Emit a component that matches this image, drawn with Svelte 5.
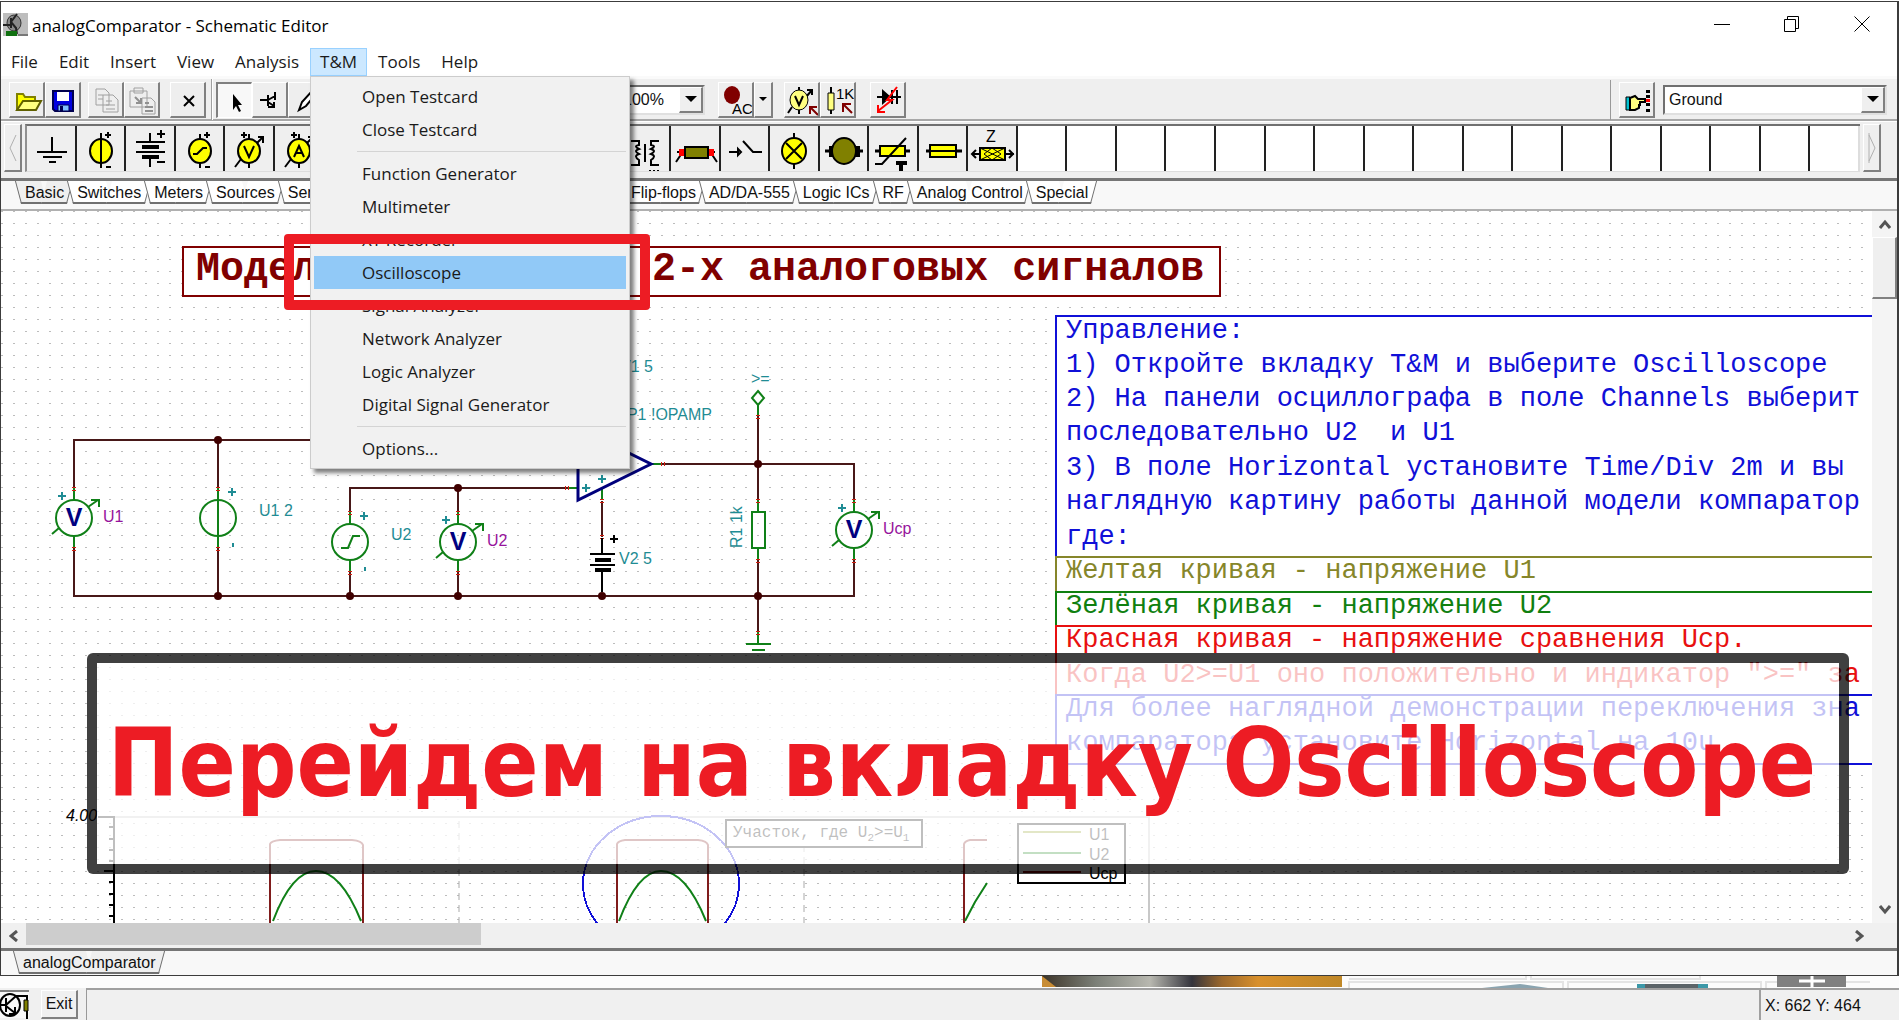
<script>
  const K = '#000', Y = '#ffff00', PY = '#ffff80', O = '#808000', R = '#800000';
  // Icon parts: d = path, f = fill, s = stroke, w = stroke width; t = caption text at x, y with size z
  const ring = (cx, cy, r) => `M${cx - r} ${cy}a${r} ${r + 1} 0 1 0 ${2 * r} 0a${r} ${r + 1} 0 1 0 ${-2 * r} 0z`;
  const icons = {
    ground: [{ d: 'M25 11V26M10 26H40M16 31H35M22 36H29', s: K, w: 2 }],
    source: [{ d: ring(24, 25, 11), f: Y, s: K, w: 2 }, { d: 'M24 7V42M28 9H34M31 6V12M29 41H34', s: K, w: 2 }],
    battery: [{ d: 'M24 7V16M10 16H39M10 26H39M24 32V41M31 8H39M35 4V12M31 36H39', s: K, w: 2 }, { d: 'M16 21H33M16 31H33', s: K, w: 4 }],
    generator: [{ d: ring(24, 25, 11), f: Y, s: K, w: 2 }, { d: 'M24 8V13M24 37V42M28 9H34M31 6V12M29 41H34M17 28H21L27 22H31', s: K, w: 2 }],
    voltmeter: [{ d: ring(24, 25, 11), f: Y, s: K, w: 2 }, { d: 'M24 8V13M24 37V42M16 9H22M19 6V12M32 17L38 11M33 11H38V17M16 33L10 41M19 20L24 31L29 20', s: K, w: 2 }],
    ammeter: [{ d: ring(24, 25, 11), f: Y, s: K, w: 2 }, { d: 'M24 8V13M24 37V42M16 9H22M19 6V12M32 17L38 11M33 11H38V17M16 33L10 41M19 31L24 20L29 31M21 27H27', s: K, w: 2 }],
    transformer: [{ d: 'M10 15H18V19Q12 20 18 23Q12 25 18 28Q12 30 18 34V39H10M38 15H30V19Q36 20 30 23Q36 25 30 28Q36 30 30 34V39H38M24 18V36', s: K, w: 2 }, { d: 'M28 45H38', s: K, w: 2, a: '2 2' }],
    potentiometer: [{ d: 'M6 26H44M11 27L5 36M40 27L46 36', s: K, w: 2 }, { d: 'M8 23H13V30H8ZM38 23H43V30H38Z', f: '#f00' }, { d: 'M14 21H37V32H14Z', f: O, s: K, w: 2 }],
    switch: [{ d: 'M8 26H18M22 15L32 26H41M17 23V29L20 26Z', s: K, w: 2 }],
    lamp: [{ d: 'M24 7V43', s: K, w: 2 }, { d: ring(24, 25, 12), f: Y, s: K, w: 2 }, { d: 'M16 17L32 33M32 17L16 33', s: K, w: 2 }],
    motor: [{ d: 'M5 25H43', s: K, w: 3 }, { d: 'M9 20H15V31H9ZM34 20H40V31H34Z', f: K }, { d: ring(24, 25, 12), f: O, s: K, w: 2 }],
    thermistor: [{ d: 'M6 25H41', s: K, w: 3 }, { d: 'M11 20H36V30H11Z', f: Y, s: K, w: 2 }, { d: 'M6 38H13L37 12', s: K, w: 2 }, { d: 'M27 37H38M32 37V46', s: K, w: 4 }],
    fuse: [{ d: 'M7 25H43', s: K, w: 3 }, { d: 'M11 19H37V31H11Z', f: Y, s: K, w: 2 }, { d: 'M11 25H37', s: K, w: 2 }],
    impedance: [{ d: 'M4 28H46M8 24L4 28L8 32M41 24L45 28L41 32', s: K, w: 2 }, { d: 'M12 22H37V34H12Z', f: Y, s: K, w: 2 }, { d: 'M12 22L37 34M37 22L12 34M24 22L16 28L24 34L33 28Z', s: K, w: 1 }, { t: 'Z', x: 18, y: 16, z: 16, f: K }],
    open: [{ d: 'M7 27V11H13L15 14H25V18', f: Y, s: O, w: 2 }, { d: 'M7 27L13 18H31L26 27Z', f: PY, s: '#606000', w: 2 }],
    save: [{ d: 'M7 8H27V28H9L7 26Z', f: '#0000e0', s: '#000050', w: 2 }, { d: 'M11 9H23V18H11Z', f: '#fff' }, { d: 'M12 22H23V28H12Z', f: '#80c0ff', s: '#000050', w: 1 }, { d: 'M14 23H17V28H14Z', f: '#000050' }],
    copy: [{ d: 'M7 6H16L20 10V22H7ZM14 12H24L29 17V29H14Z', f: '#eee', s: '#a0a0a0', w: 1 }, { d: 'M9 12H14M9 16H14M17 18H23M17 22H26M17 26H26', s: '#a0a0a0', w: 1 }],
    paste: [{ d: 'M5 8H22V24H5ZM9 5H18V10H9ZM17 15H26L30 19V31H17Z', f: '#eee', s: '#a0a0a0', w: 1 }, { d: 'M10 14L16 20M16 15V20H11M20 20H24M20 24H28M20 28H28', s: '#909090', w: 2 }],
    remove: [{ d: 'M13 13L23 23M23 13L13 23', s: K, w: 2 }],
    arrow: [{ d: 'M15 10V26L18 22L21 28L23 27L20 21H24Z', f: K }],
    wire: [{ d: 'M7 17H15M15 12V23M15 17L22 13M22 9V17M15 19L21 23M21 19V24H15', s: K, w: 2 }],
    pen: [{ d: 'M10 27L13 19L23 8L27 11L17 23Z', f: '#fff', s: K, w: 2 }],
    ac: [{ d: ring(13, 12, 8), f: R }, { t: 'AC', x: 13, y: 31, z: 15, f: K }],
    probe: [{ d: 'M14 4V31M21 14L27 7M22 7H27V12M7 24L3 30', s: K, w: 2 }, { d: ring(14, 17, 9), f: PY, s: K, w: 1 }, { d: 'M10 13L14 22L18 13', s: K, w: 2 }, { d: 'M33 32L25 24M25 31V24H32', s: R, w: 2 }],
    value: [{ d: 'M10 4V31', s: K, w: 2 }, { d: 'M7 10H13V27H7Z', f: PY, s: K, w: 1 }, { t: '1K', x: 15, y: 16, z: 15, f: K }, { d: 'M31 30L22 21M22 29V21H30', s: R, w: 2 }],
    diode: [{ d: 'M6 14H30M21 7V21M26 7V21', s: K, w: 2 }, { d: 'M11 6L20 14L11 22Z', f: K }, { d: 'M26 4L16 17H21L7 28M7 22V29H14', s: '#f00', w: 2 }],
    hand: [{ d: 'M6 14H10V27H6Z', f: '#00c0d0', s: K, w: 1 }, { d: 'M10 15L15 13L18 16H25V19H20V22H19V25L15 27H10Z', f: PY, s: K, w: 2 }, { d: 'M28 7V10M28 12V15M28 20V23M28 26V29', s: K, w: 4 }, { d: 'M28 16V19', s: '#f00', w: 4 }],
    app: [{ d: 'M0 0H25V23H0Z', f: '#bdbdbd' }, { d: ring(11, 10, 7), f: '#8a8a8a', s: '#333', w: 1 }, { d: 'M8 5V15M14 1L8 9L13 15L14 21M0 12H7', s: '#222', w: 2 }, { d: 'M3 18H14V23H3Z', f: '#107010' }, { d: 'M15 22H25', s: '#333', w: 1 }],
    tina: [{ d: 'M0 3H29V30H0Z', f: '#f8f8f8' }, { d: 'M0 3H29', s: '#808080', w: 2 }, { d: ring(10, 17, 10), s: K, w: 2 }, { d: 'M0 17H6M6 10V24M6 17L16 8H27V31M6 18L15 25M15 19V26H9', s: K, w: 2 }, { d: 'M24 12H28V23H24Z', f: O, s: K, w: 1 }]
  };
  const menus = ['File', 'Edit', 'Insert', 'View', 'Analysis', 'T&M', 'Tools', 'Help'];
  const groups = [
    ['Open Testcard', 'Close Testcard'],
    ['Function Generator', 'Multimeter', 'XY Recorder', 'Oscilloscope', 'Signal Analyzer', 'Network Analyzer', 'Logic Analyzer', 'Digital Signal Generator'],
    ['Options...']
  ];
  const parts = ['ground', 'source', 'battery', 'generator', 'voltmeter', 'ammeter', '', '', '', '', '', '', 'transformer', 'potentiometer', 'switch', 'lamp', 'motor', 'thermistor', 'fuse', 'impedance'];
  const cells = Array.from({ length: 37 }, (_, i) => i < parts.length ? { part: parts[i] } : null);
  const tabsLeft = ['Basic', 'Switches', 'Meters', 'Sources', 'Semiconductors', 'Spice Macros', 'Gates'];
  const tabsRight = ['Flip-flops', 'AD/DA-555', 'Logic ICs', 'RF', 'Analog Control', 'Special'];
  const notes = [
    { c: '#1010d8', y: 316, h: 241, lines: [[338, 'Управление:'], [372, '1) Откройте вкладку T&M и выберите Oscilloscope'], [406, '2) На панели осциллографа в поле Channels выберит'], [440, 'последовательно U2  и U1'], [475, '3) В поле Horizontal установите Time/Div 2m и вы'], [509, 'наглядную картину работы данной модели компаратор'], [544, 'где:']] },
    { c: '#86862a', y: 557, h: 35, lines: [[578, 'Желтая кривая - напряжение U1']] },
    { c: '#108010', y: 592, h: 34, lines: [[613, 'Зелёная кривая - напряжение U2']] },
    { c: '#e81010', y: 626, h: 69, lines: [[647, 'Красная кривая - напряжение сравнения Uср.'], [682, 'Когда U2>=U1 оно положительно и индикатор ">=" за']] },
    { c: '#1010d8', y: 695, h: 69, lines: [[716, 'Для более наглядной демонстрации переключения зна'], [750, 'компаратора установите Horizontal на 10u']] }
  ];
  const nodes = [[217, 440], [217, 596], [349, 596], [457, 488], [457, 596], [601, 596], [757, 464], [757, 596]];
  const ticks = [828, 840, 851, 862, 883, 895, 906, 917];
</script>

{#snippet icon(name, w, h)}
  <svg class="icon" width={w} height={h} viewBox="0 0 {w} {h}" aria-hidden="true">
    {#each icons[name] ?? [] as p}
      {#if p.t}
        <text x={p.x} y={p.y} font-size={p.z} fill={p.f}>{p.t}</text>
      {:else}
        <path d={p.d} fill={p.f ?? 'none'} stroke={p.s ?? 'none'} stroke-width={p.w ?? 0} stroke-dasharray={p.a} />
      {/if}
    {/each}
  </svg>
{/snippet}

{#snippet tool(name, label)}
  <button class="tool" class:pressed={name === 'arrow'} aria-label={label}>{@render icon(name, 33, 33)}</button>
{/snippet}

<div class="app">
  <main class="window">
    <header class="title">
      {@render icon('app', 25, 23)}
      <h1>analogComparator - Schematic Editor</h1>
      <div class="controls">
        <button aria-label="Minimize"><svg width="16" height="16"><path d="M0 8.500H16" /></svg></button>
        <button aria-label="Restore"><svg width="16" height="16"><path d="M.5 3.500H11.500V15.500H.5ZM3.500 3.500V.5H14.500V12.500H11.500" /></svg></button>
        <button aria-label="Close"><svg width="16" height="16"><path d="M.5 .5L15.500 15.500M15.500 .5L.5 15.500" /></svg></button>
      </div>
    </header>

    <nav class="menubar">
      {#each menus as m}
        <div class="entry">
          <button class:open={m === 'T&M'}>{m}</button>
          {#if m === 'T&M'}
            <div class="popup">
              {#each groups as g, i}
                {#if i}<hr />{/if}
                {#each g as item}
                  <button class:current={item === 'Oscilloscope'}>{item}</button>
                {/each}
              {/each}
            </div>
          {/if}
        </div>
      {/each}
    </nav>

    <div class="toolbar">
      <div class="tools">{@render tool('open', 'Open')}{@render tool('save', 'Save')}</div>
      <div class="tools">{@render tool('copy', 'Copy')}{@render tool('paste', 'Paste')}</div>
      <div class="tools">{@render tool('remove', 'Delete')}</div>
      <div class="divider"></div>
      <div class="tools drawing">{@render tool('arrow', 'Select')}{@render tool('wire', 'Wire')}{@render tool('pen', 'Draw')}</div>
      <label class="combo zoom"><select aria-label="Zoom"><option>100%</option></select><span class="drop"></span></label>
      <div class="tools run">{@render tool('ac', 'AC analysis')}<button class="tool narrow" aria-label="Analysis mode"><span class="caret"></span></button></div>
      <div class="tools">{@render tool('probe', 'Voltage probe')}{@render tool('value', 'Change value')}</div>
      <div class="tools">{@render tool('diode', 'Fault')}</div>
      <div class="finder">
        {@render tool('hand', 'Find component')}
        <label class="combo part"><select aria-label="Component"><option>Ground</option></select><span class="drop"></span></label>
      </div>
    </div>

    <div class="palette">
      <button class="scroll" aria-label="Previous parts"><svg width="10" height="32"><path d="M8 3L2 16L8 29" /></svg></button>
      <div class="cells">
        {#each cells as c}
          {#if c}
            <button class="cell" aria-label={c.part || 'part'}>{@render icon(c.part, 49, 46)}</button>
          {:else}
            <span class="cell blank"></span>
          {/if}
        {/each}
      </div>
      <button class="scroll" aria-label="Next parts"><svg width="10" height="32"><path d="M2 1V31M2 3L8 16L2 29" /></svg></button>
    </div>

    <div class="tabs">
      <div class="tabset first">
        {#each tabsLeft as t}<button class="tab" class:active={t === 'Basic'}>{t}</button>{/each}
      </div>
      <div class="tabset">
        {#each tabsRight as t}<button class="tab">{t}</button>{/each}
      </div>
    </div>

    <section class="work">
      <svg class="sheet" aria-label="Schematic">
        <defs>
          <pattern id="grid" width="12" height="12" patternUnits="userSpaceOnUse" x="0" y="0">
            <rect x="0" y="0" width="2" height="1" fill="#bcbcbc" />
          </pattern>
        </defs>
        <rect width="100%" height="100%" fill="url(#grid)" />
        {#snippet plus(x, y, cls)}
          <path class={cls} d="M{x - 4} {y}H{x + 4}M{x} {y - 4}V{y + 4}" />
        {/snippet}
        {#snippet pin(x, y)}
          <path class="pin" d="M{x - 2} {y - 1}H{x + 2}M{x - 2} {y + 2}H{x + 2}" />
        {/snippet}
        {#snippet body(x, y)}
          <path class="part" d="M{x} {y - 30}V{y - 18}M{x} {y + 18}V{y + 30}" />
          <circle class="part" cx={x} cy={y} r="18" />
          {@render pin(x, y - 30)}
          {@render pin(x, y + 30)}
        {/snippet}
        {#snippet meter(x, y)}
          {@render body(x, y)}
          <path class="part" d="M{x + 14} {y - 11}L{x + 24} {y - 18}M{x + 17} {y - 18}H{x + 25}V{y - 11}M{x - 15} {y + 10}L{x - 22} {y + 16}" />
          {@render plus(x - 12, y - 22, 'mark')}
          <text class="v" {x} y={y + 8}>V</text>
        {/snippet}
        <g transform="translate(0 -211)">
          <path class="wire" d="M73 488V440H600M73 548V596H853V560M217 440V488M217 548V596M349 512V488H567M349 572V596M457 488V512M457 572V596M601 501V537M660 464H853V500M757 416V500M757 560V631" />
          {#each nodes as [x, y]}<circle cx={x} cy={y} r="4" fill="#400000" />{/each}
          {@render meter(73, 518)}
          {@render body(217, 518)}
          <path class="part" d="M217 500V536" />
          {@render plus(231, 492, 'mark')}
          <path class="mark" d="M232 543V547M364 567V571" />
          {@render body(349, 542)}
          <path class="part" d="M340 548H347L352 536H359" />
          {@render plus(363, 516, 'mark')}
          {@render meter(457, 542)}
          {@render meter(853, 530)}
          <path class="part" d="M567 488H577M650 464H660M601 488V500M757 404V416M757 500V512M757 548V560M751 512H764V548H751ZM757 391L763 398L757 405L751 398ZM757 631V644M745 644H770M751 650H764" />
          <path class="amp" d="M577 428V500L650 464Z" />
          <path class="pin" d="M564 486V490M567 486V490M660 462V466M663 462V466" />
          {@render plus(585, 488, 'mark')}
          {@render plus(601, 479, 'mark')}
          {@render pin(601, 500)}{@render pin(601, 536)}{@render pin(757, 416)}{@render pin(757, 500)}{@render pin(757, 560)}{@render pin(757, 632)}
          <path class="cellplate" d="M601 538V554M589 554H614M589 565H614M601 571V592" />
          <path class="cellplate thick" d="M594 560H610M594 570H610" />
          {@render plus(613, 539, 'cellplate')}
          <g class="teal">
            <text x="258" y="516">U1 2</text>
            <text x="390" y="540">U2</text>
            <text x="619" y="372">V1 5</text>
            <text x="711" y="420" text-anchor="end">OP1 !OPAMP</text>
            <text x="618" y="564">V2 5</text>
            <text x="750" y="384">&gt;=</text>
            <text transform="translate(741 548) rotate(-90)">R1 1k</text>
          </g>
          <g class="purple">
            <text x="102" y="522">U1</text>
            <text x="486" y="546">U2</text>
            <text x="882" y="534">Ucp</text>
          </g>

          <rect x="182" y="247" width="1037" height="49" fill="#fff" stroke="#800000" stroke-width="2" shape-rendering="crispEdges" />
          <text class="heading" x="195" y="280">Модель компаратора 2-х аналоговых сигналов</text>

          {#each notes as n}
            <rect x="1055" y={n.y} width="1100" height={n.h} fill="#fff" stroke={n.c} stroke-width="2" shape-rendering="crispEdges" />
            {#each n.lines as [y, t]}<text class="note" x="1065" {y} fill={n.c}>{t}</text>{/each}
          {/each}
        </g>

        <g transform="translate(-1 -212)">
          <path d="M98 818H1149V930" fill="none" stroke="#c8c8c8" stroke-width="2" />
          <path d="M459 822V930M804 822V930" stroke="#aaa" stroke-width="1" stroke-dasharray="7 5" />
          <path class="cellplate" d="M98 818H114V930M104 872H114" />
          {#each ticks as y}<path class="cellplate" d="M109 {y}H114" />{/each}
          <text x="66" y="822" font-style="italic" class="scale">4.00</text>
          <path class="pulse" d="M270 930V845Q271 842 280 841H352Q362 842 363 846V930M617 930V845Q618 842 625 841H698Q707 842 708 846V930M964 930V845Q965 842 970 841H987" />
          <path class="sine" d="M273 922C287 885 301 872 316 872S346 885 361 922M619 922C633 885 647 872 661 872S691 885 706 922M965 922L975 903L987 884" />
          <ellipse cx="661" cy="885" rx="78" ry="68" fill="none" stroke="#1010d8" stroke-width="2" shape-rendering="crispEdges" />
          <rect x="726" y="821" width="196" height="27" fill="#fff" stroke="#000" stroke-width="2" />
          <text class="zone" x="733" y="838">Участок, где U<tspan font-size="11" dy="4">2</tspan><tspan dy="-4">&gt;=U</tspan><tspan font-size="11" dy="4">1</tspan></text>
          <rect x="1018" y="825" width="107" height="59" fill="#fff" stroke="#000" stroke-width="2" />
          <path d="M1023 833H1081" stroke="#90a020" stroke-width="2" />
          <path d="M1023 854H1081" stroke="#108010" stroke-width="2" />
          <path d="M1023 873H1081" stroke="#800000" stroke-width="2" />
          <g class="scale"><text x="1089" y="841">U1</text><text x="1089" y="861">U2</text><text x="1089" y="880">Ucp</text></g>
        </g>
      </svg>
      <div class="vbar">
        <button aria-label="Scroll up"><svg width="12" height="10"><path d="M1 9L6 3L11 9" /></svg></button>
        <div class="vthumb"></div>
        <button class="end" aria-label="Scroll down"><svg width="12" height="10"><path d="M1 1L6 7L11 1" /></svg></button>
      </div>
    </section>
    <div class="hbar">
      <button aria-label="Scroll left"><svg width="10" height="12"><path d="M8 1L2 6L8 11" /></svg></button>
      <div class="hthumb"></div>
      <button class="end" aria-label="Scroll right"><svg width="10" height="12"><path d="M2 1L8 6L2 11" /></svg></button>
    </div>
    <div class="tabs docs"><button class="tab active">analogComparator</button></div>
  </main>

  <svg class="desktop" aria-hidden="true">
    <defs>
      <linearGradient id="photo"><stop offset="0" stop-color="#3c3428" /><stop offset=".18" stop-color="#7c8078" /><stop offset=".36" stop-color="#b8b8b0" /><stop offset=".5" stop-color="#34343c" /><stop offset=".6" stop-color="#9c682c" /><stop offset=".72" stop-color="#d8902c" /><stop offset="1" stop-color="#c08828" /></linearGradient>
    </defs>
    <rect x="1042" width="300" height="11" fill="url(#photo)" />
    <path d="M1042 0L1056 11H1042Z" fill="#c88c34" />
    <path d="M1349 3H1526V0M1531 0V3H1700V0M1349 12V6H1563V12M1568 12V6H1761V12M1766 12V6H1870" fill="none" stroke="#e4e4e4" stroke-width="2" />
    <path d="M1482 12L1520 8L1548 12Z" fill="#8aa4b0" />
    <path d="M1638 8H1706V12H1638Z" fill="#5c6468" /><path d="M1637 8H1645V12H1637ZM1698 8H1708V12H1698Z" fill="#3c98a8" />
    <rect x="1777" width="69" height="11" fill="#808080" />
    <path d="M1799 5H1825M1812 0V11" stroke="#fff" stroke-width="3" />
  </svg>

  <footer class="status">
    {@render icon('tina', 30, 32)}
    <button class="exit">Exit</button>
    <div class="pane"></div>
    <output>X: 662 Y: 464</output>
  </footer>

  <div class="frame"></div>
  <p class="banner">Перейдем на вкладку Oscilloscope</p>
</div>

<style>
  :global(body) { margin: 0; background: #fff; }
  * { box-sizing: border-box; }
  button, select { font: inherit; color: inherit; border: 0; padding: 0; margin: 0; background: none; border-radius: 0; }
  .app { position: relative; display: flex; flex-direction: column; min-height: 100vh; padding-top: 1px; overflow: hidden; font: 16px/20px "Liberation Sans", Arial, sans-serif; color: #111; }
  .window { flex: 1; display: flex; flex-direction: column; border: 1px solid #3c3c3c; border-right-width: 2px; background: #f0f0f0; min-width: 0; }
  .icon { display: block; flex: none; }

  .title { display: flex; align-items: center; height: 46px; padding: 0 0 2px 2px; background: #fff; gap: 4px; }
  .title h1 { margin: 4px 0 0; font: 17px/20px "Open Sans", "Noto Sans", sans-serif; color: #000; }
  .controls { margin-left: auto; display: flex; }
  .controls button { width: 70px; height: 32px; display: grid; place-items: center; }
  .controls svg path { fill: none; stroke: #000; stroke-width: 1; }

  .menubar { display: flex; gap: 1px; height: 28px; background: #fff; font: 17px/24px "Open Sans", "Noto Sans", sans-serif; color: #1a1a1a; }
  .entry { position: relative; }
  .entry > button { height: 28px; padding: 0 9px; border: 1px solid transparent; white-space: nowrap; }
  .entry > button.open { background: #cce8ff; border-color: #99d1ff; }
  .popup { position: absolute; z-index: 5; left: 0; top: 100%; width: 320px; padding: 3px; border: 1px solid #ccc; background: #f1f1f1; box-shadow: 4px 4px 4px rgba(0, 0, 0, .5); }
  .popup button { display: block; width: 100%; height: 33px; padding-left: 48px; text-align: left; }
  .popup button.current { background: #91c9f7; }
  .popup hr { margin: 5px 0 5px 43px; border: 0; border-top: 1px solid #d4d4d4; }

  .toolbar { display: flex; align-items: center; height: 45px; padding: 1px 10px 0 8px; border-bottom: 2px solid #a8a8a8; border-top: 3px solid #fafafa; background: #efefef; gap: 7px; }
  .tools { display: flex; flex: none; }
  .tools:nth-child(3) { margin-left: 3px; }
  .tool { width: 36px; height: 36px; flex: none; border: 1px solid #fff; border-right: 2px solid #808080; border-bottom: 2px solid #808080; background: #eee; overflow: hidden; }
  .tool.pressed { background: #f8f8f8; border: 2px solid #808080; border-right: 1px solid #fff; border-bottom: 1px solid #fff; }
  .tool.narrow { width: 19px; display: grid; place-items: center; }
  .divider { width: 2px; height: 41px; border-left: 1px solid #a0a0a0; background: #fff; margin: 0 -4px 0 -2px; }
  .drawing { width: 394px; }
  .combo { position: relative; display: flex; flex: none; height: 30px; border: 2px solid #707070; border-right-color: #e0e0e0; border-bottom-color: #e0e0e0; background: #fff; }
  .combo select { flex: 1; min-width: 0; appearance: none; padding-left: 4px; background: #fff; }
  .zoom { width: 88px; margin-right: 6px; }
  .combo.part { width: 224px; }
  .drop { width: 24px; background: #efefef; border: 1px solid #fff; border-right: 2px solid #808080; border-bottom: 2px solid #808080; display: grid; place-items: center; pointer-events: none; }
  .drop::after { content: ""; border: 6px solid transparent; border-top-color: #000; border-bottom: 0; }
  .caret { border: 4px solid transparent; border-top-color: #000; border-bottom: 0; }
  .run { margin-right: 4px; }
  .run + .tools { margin-right: 7px; }
  .finder { display: flex; align-items: center; gap: 8px; height: 40px; margin-left: auto; padding-left: 8px; border-left: 1px solid #999; }

  .palette { display: flex; align-items: stretch; gap: 3px; height: 57px; padding: 2px 16px 6px 3px; background: #efefef; border-top: 1px solid #fff; }
  .scroll { width: 18px; flex: none; display: grid; place-items: center; border: 1px solid #fff; border-right: 2px solid #808080; border-bottom: 2px solid #808080; background: #efefef; overflow: hidden; }
  .scroll svg path { fill: none; stroke: #b0b0b0; }
  .cells { flex: 1; display: grid; grid-template-columns: repeat(37, 1fr); border-top: 2px solid #707070; border-left: 2px solid #909090; border-bottom: 1px solid #ddd; background: #fff; }
  .cell { min-width: 0; border-right: 2px solid #222; background: #efefef; overflow: hidden; }
  .cell:last-child { border-right-color: #ddd; }
  .blank { background: #fff; }

  .tabs { display: flex; height: 33px; padding-left: 17px; border-top: 3px solid #767676; border-bottom: 2px solid #b0b0b0; background: #f8f8f8; }
  .tabset { display: flex; }
  .first { width: 606px; flex: none; }
  .first .tab:last-child { flex: 1; }
  .tab { position: relative; z-index: 0; height: 23px; padding: 0 6px 0 7px; line-height: 22px; white-space: nowrap; }
  .tab::before, .tab::after { content: ""; position: absolute; z-index: -1; top: 0; bottom: 0; background: #fff; border-bottom: 2px solid #707070; }
  .tab::before { left: 0; right: 50%; border-left: 1px solid #707070; transform: skewX(15deg); }
  .tab::after { left: 50%; right: 0; border-right: 1px solid #707070; transform: skewX(-15deg); }
  .tab.active::before, .tab.active::after { background: #efefef; }
  .docs { height: 27px; padding-left: 15px; border-bottom: 0; }

  .work { display: flex; flex: 1; min-height: 0; background: #fff; }
  .sheet { flex: 1; min-width: 0; height: auto; display: block; overflow: hidden; }
  .sheet text { white-space: pre; }
  .wire { fill: none; stroke: #481818; stroke-width: 2; shape-rendering: crispEdges; }
  .sheet .part { fill: none; stroke: #108018; stroke-width: 2; }
  .pin { stroke: #d02010; stroke-width: 1; shape-rendering: crispEdges; }
  .mark { fill: none; stroke: #1f8c94; stroke-width: 2; shape-rendering: crispEdges; }
  .cellplate { fill: none; stroke: #000; stroke-width: 2; shape-rendering: crispEdges; }
  .thick { stroke-width: 4; }
  .amp { fill: none; stroke: #00007c; stroke-width: 3; }
  .v { font: bold 25px "Liberation Sans", sans-serif; text-anchor: middle; fill: #000080; }
  .teal { fill: #1f8c94; }
  .purple { fill: #96149c; }
  .heading { font: bold 40px "Liberation Mono", monospace; fill: #800000; }
  .note { font: 27px "Liberation Mono", monospace; }
  .zone { font: 16px "Liberation Mono", monospace; }
  .scale { font-size: 16px; }
  .pulse { fill: none; stroke: #801c1c; stroke-width: 2; }
  .sine { fill: none; stroke: #108018; stroke-width: 2; }

  .vbar { width: 25px; flex: none; display: flex; flex-direction: column; background: #f4f4f4; }
  .vbar button { height: 26px; display: grid; place-items: center; }
  .vthumb { height: 62px; background: #efefef; border: 1px solid #fff; border-right: 2px solid #808080; border-bottom: 2px solid #808080; }
  .vbar .end { margin-top: auto; }
  .vbar svg path, .hbar svg path { fill: none; stroke: #555; stroke-width: 3; }
  .hbar { display: flex; height: 25px; background: #f0f0f0; padding-right: 26px; }
  .hbar button { width: 25px; display: grid; place-items: center; }
  .hbar .end { margin-left: auto; }
  .hthumb { width: 455px; margin-bottom: 3px; background: #cdcdcd; }

  .desktop { display: block; width: 100%; height: 12px; background: #fcfcfc; }
  .status { display: flex; height: 32px; background: #f0f0f0; }
  .exit { width: 37px; height: 29px; margin: 2px 4px 0 11px; border: 1px solid #fff; border-right: 2px solid #808080; border-bottom: 2px solid #808080; }
  .pane { flex: 1; margin-left: 4px; border-left: 1px solid #999; border-top: 2px solid #a0a0a0; }
  .status output { width: 140px; padding: 6px 0 0 4px; border-left: 2px solid #a0a0a0; border-top: 2px solid #a0a0a0; white-space: nowrap; }

  .frame { position: absolute; z-index: 6; left: 284px; top: 234px; width: 366px; height: 76px; border: 10px solid #ed1c24; border-radius: 4px; pointer-events: none; }
  .banner { position: absolute; z-index: 7; left: 87px; right: 50px; top: 653px; height: 221px; margin: 0; padding-right: 12px; display: flex; align-items: center; justify-content: center; border: 10px solid rgba(0, 0, 0, .75); border-radius: 6px; background: rgba(255, 255, 255, .75); background-clip: padding-box; font: bold 94px/120px "DejaVu Sans Condensed", "Noto Sans", sans-serif; color: #ed1c24; white-space: nowrap; }
</style>
